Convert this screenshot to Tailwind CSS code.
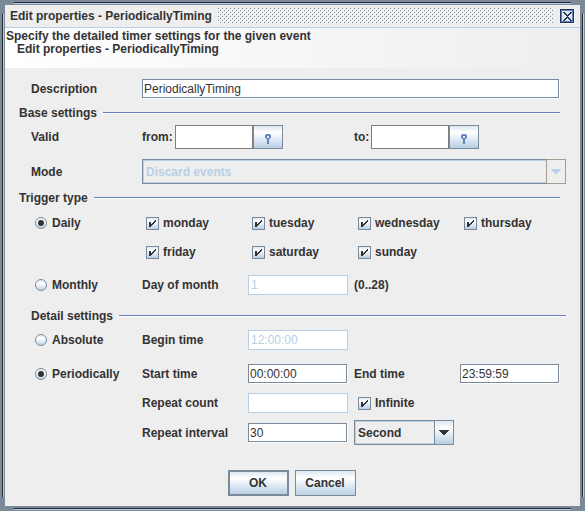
<!DOCTYPE html>
<html lang="en">
<head>
<meta charset="utf-8">
<meta name="viewport" content="width=device-width, initial-scale=1">
<title>Edit properties - PeriodicallyTiming</title>
<script src="https://cdn.jsdelivr.net/npm/@tailwindcss/browser@4"></script>
</head>
<body class="bg-[#eeeeee] font-['Liberation_Sans',Arial,sans-serif] text-[12px] leading-[14px] font-bold text-[#333333]">
<svg class="absolute size-0" aria-hidden="true">
  <defs><linearGradient id="rg" x1="0" y1="0" x2="0" y2="1"><stop offset="0" stop-color="#dde8f3"/><stop offset=".35" stop-color="#ffffff"/><stop offset="1" stop-color="#b8cfe5"/></linearGradient></defs>
  <symbol id="check" viewBox="0 0 13 13"><path d="M3 5h2v5h-2zM9 3h1v2h-1zM8 4h1v2h-1zM7 5h1v2h-1zM6 6h1v2h-1zM5 7h1v2h-1z" fill="#333333"/></symbol>
  <symbol id="pin" viewBox="0 0 6 10"><path d="M1 0h4v1h1v3h-1v1h-1v5h-2v-5h-1v-1h-1v-3h1zM2 2v2h2v-2z" fill="#6382bf" fill-rule="evenodd"/></symbol>
  <symbol id="arrow" viewBox="0 0 10 5"><path d="M0 0h10v1h-1v1h-1v1h-1v1h-1v1h-2v-1h-1v-1h-1v-1h-1v-1h-1z" fill="currentColor"/></symbol>
  <symbol id="ring" viewBox="0 0 12 12"><circle cx="6" cy="6" r="5.5" fill="url(#rg)" stroke="#7a8a99"/></symbol>
</svg>

<div class="relative flex min-h-screen flex-col border-5 border-[#7a8a99]">
  <div class="pointer-events-none absolute inset-x-[9px] -top-[3px] h-[2px] border-b border-[#b8cfe5] bg-[#23292e]"></div>
  <div class="pointer-events-none absolute inset-x-[9px] -bottom-[4px] h-[2px] border-b border-[#b8cfe5] bg-[#23292e]"></div>
  <div class="pointer-events-none absolute inset-y-[9px] -left-[3px] w-[2px] border-r border-[#b8cfe5] bg-[#23292e]"></div>
  <div class="pointer-events-none absolute inset-y-[9px] -right-[4px] w-[2px] border-r border-[#b8cfe5] bg-[#23292e]"></div>

  <header class="flex h-[23px] items-center border-b border-[#b8cfe5] pr-[5px] pl-[5px]">
    <h1>Edit properties - PeriodicallyTiming</h1>
    <svg class="mr-[7px] ml-[6px] h-[16px] min-w-0 flex-1" aria-hidden="true" shape-rendering="crispEdges">
      <defs><pattern id="bumps" width="4" height="4" patternUnits="userSpaceOnUse">
        <path d="M1 1h1v1h-1zM3 3h1v1h-1z" fill="#ffffff"/><path d="M0 0h1v1h-1zM2 2h1v1h-1z" fill="#7a8a99"/>
      </pattern></defs>
      <rect width="100%" height="100%" fill="url(#bumps)"/>
    </svg>
    <button type="button" aria-label="Close" class="block size-[15px]">
      <svg width="15" height="15" viewBox="0 0 15 15" shape-rendering="crispEdges">
        <path d="M1 1h14v14h-14z" fill="#ffffff"/>
        <path d="M0 0h14v14h-14z" fill="#23305c"/>
        <path d="M1 1h12v12h-12z" fill="#6382bf"/>
        <path d="M2 2h10v10h-10z" fill="#dce7f4"/>
        <path d="M3 3h2v1h1v1h1v1h1v-1h1v-1h1v-1h2v1h-1v1h-1v1h-1v1h-1v1h1v1h1v1h1v1h1v1h-2v-1h-1v-1h-1v-1h-1v1h-1v1h-1v1h-2v-1h1v-1h1v-1h1v-1h1v-1h-1v-1h-1v-1h-1v-1h-1z" fill="#23305c"/>
      </svg>
    </button>
  </header>

  <div class="h-[40px] bg-linear-to-r from-white to-[#eeeeee] px-px pt-[2px] leading-[13px]">
    <p>Specify the detailed timer settings for the given event</p>
    <p class="pl-[11px]">Edit properties - PeriodicallyTiming</p>
  </div>

  <form class="px-[14px] pt-[11px] pb-[10px]">
    <div class="grid h-[20px] grid-cols-[111px_minmax(0,1fr)] items-center pl-3">
      <label for="description">Description</label>
      <div class="pr-[7px] pb-px"><input id="description" value="PeriodicallyTiming" class="block h-[19px] w-full border border-[#7a8a99] bg-white pt-px pl-px font-normal shadow-[1px_1px_0_#ffffff]"></div>
    </div>

    <div class="mt-[6px] flex h-[16px] items-center gap-[6px] pr-[6px]"><h2>Base settings</h2><div class="h-[2px] flex-1 border-b border-white bg-[#6382bf]"></div></div>

    <div class="mt-[4px] grid h-[24px] grid-cols-[111px_repeat(4,minmax(0,1fr))] items-center pl-3">
      <span>Valid</span>
      <div class="col-span-2 flex items-center">
        <label for="from" class="w-[33px]">from:</label>
        <input id="from" class="h-[24px] w-[78px] border border-[#7f7f7f] bg-white px-1 font-normal">
        <button type="button" aria-label="Choose start date" class="flex h-[24px] w-[30px] items-center justify-center border border-[#7a8a99] bg-linear-to-b from-[#dde8f3] via-white via-30% to-[#b8cfe5] pt-[4px]"><svg width="6" height="10" shape-rendering="crispEdges"><use href="#pin"/></svg></button>
      </div>
      <div class="col-span-2 flex items-center">
        <label for="to" class="w-[17px]">to:</label>
        <input id="to" class="h-[24px] w-[78px] border border-[#7f7f7f] bg-white px-1 font-normal">
        <button type="button" aria-label="Choose end date" class="flex h-[24px] w-[30px] items-center justify-center border border-[#7a8a99] bg-linear-to-b from-[#dde8f3] via-white via-30% to-[#b8cfe5] pt-[4px]"><svg width="6" height="10" shape-rendering="crispEdges"><use href="#pin"/></svg></button>
      </div>
    </div>

    <div class="mt-[10px] grid h-[25px] grid-cols-[111px_minmax(0,1fr)] items-center pl-3">
      <label for="mode">Mode</label>
      <div class="relative">
        <select id="mode" disabled class="block h-[25px] w-full appearance-none border border-[#7a8a99] bg-[#eeeeee] pl-[3px] text-[#b8cfe5] opacity-100 inset-ring inset-ring-[#b8cfe5]"><option>Discard events</option></select>
        <span class="pointer-events-none absolute inset-y-0 right-0 flex w-[20px] items-center justify-center border border-[#a59c8c] bg-[#eeeeee] text-[#b8cfe5]"><svg width="10" height="5" shape-rendering="crispEdges"><use href="#arrow"/></svg></span>
      </div>
    </div>

    <div class="mt-[6px] flex h-[16px] items-center gap-[6px] pr-[6px]"><h2>Trigger type</h2><div class="h-[2px] flex-1 border-b border-white bg-[#6382bf]"></div></div>

    <div class="mt-[7px] grid grid-cols-[111px_repeat(4,minmax(0,1fr))] items-center gap-y-[9px] pl-3">
      <label class="flex h-[20px] items-center gap-[5px] pl-[4px]"><span class="relative size-[12px]"><input type="radio" name="trigger" checked class="peer absolute inset-0 appearance-none"><svg class="pointer-events-none absolute inset-0" width="12" height="12"><use href="#ring"/></svg><i class="pointer-events-none absolute inset-[3px] hidden rounded-full bg-[#333333] peer-checked:block"></i></span>Daily</label>
      <label class="flex items-center gap-[4px] pl-[4px]"><span class="relative size-[13px]"><input type="checkbox" checked class="peer absolute inset-0 appearance-none border border-[#7a8a99] bg-linear-to-b from-[#dde8f3] via-white via-30% to-[#b8cfe5]"><svg class="pointer-events-none absolute inset-0 hidden peer-checked:block" width="13" height="13" shape-rendering="crispEdges"><use href="#check"/></svg></span>monday</label>
      <label class="flex items-center gap-[4px] pl-[4px]"><span class="relative size-[13px]"><input type="checkbox" checked class="peer absolute inset-0 appearance-none border border-[#7a8a99] bg-linear-to-b from-[#dde8f3] via-white via-30% to-[#b8cfe5]"><svg class="pointer-events-none absolute inset-0 hidden peer-checked:block" width="13" height="13" shape-rendering="crispEdges"><use href="#check"/></svg></span>tuesday</label>
      <label class="flex items-center gap-[4px] pl-[4px]"><span class="relative size-[13px]"><input type="checkbox" checked class="peer absolute inset-0 appearance-none border border-[#7a8a99] bg-linear-to-b from-[#dde8f3] via-white via-30% to-[#b8cfe5]"><svg class="pointer-events-none absolute inset-0 hidden peer-checked:block" width="13" height="13" shape-rendering="crispEdges"><use href="#check"/></svg></span>wednesday</label>
      <label class="flex items-center gap-[4px] pl-[4px]"><span class="relative size-[13px]"><input type="checkbox" checked class="peer absolute inset-0 appearance-none border border-[#7a8a99] bg-linear-to-b from-[#dde8f3] via-white via-30% to-[#b8cfe5]"><svg class="pointer-events-none absolute inset-0 hidden peer-checked:block" width="13" height="13" shape-rendering="crispEdges"><use href="#check"/></svg></span>thursday</label>
      <label class="col-start-2 flex h-[20px] items-center gap-[4px] pl-[4px]"><span class="relative size-[13px]"><input type="checkbox" checked class="peer absolute inset-0 appearance-none border border-[#7a8a99] bg-linear-to-b from-[#dde8f3] via-white via-30% to-[#b8cfe5]"><svg class="pointer-events-none absolute inset-0 hidden peer-checked:block" width="13" height="13" shape-rendering="crispEdges"><use href="#check"/></svg></span>friday</label>
      <label class="flex items-center gap-[4px] pl-[4px]"><span class="relative size-[13px]"><input type="checkbox" checked class="peer absolute inset-0 appearance-none border border-[#7a8a99] bg-linear-to-b from-[#dde8f3] via-white via-30% to-[#b8cfe5]"><svg class="pointer-events-none absolute inset-0 hidden peer-checked:block" width="13" height="13" shape-rendering="crispEdges"><use href="#check"/></svg></span>saturday</label>
      <label class="flex items-center gap-[4px] pl-[4px]"><span class="relative size-[13px]"><input type="checkbox" checked class="peer absolute inset-0 appearance-none border border-[#7a8a99] bg-linear-to-b from-[#dde8f3] via-white via-30% to-[#b8cfe5]"><svg class="pointer-events-none absolute inset-0 hidden peer-checked:block" width="13" height="13" shape-rendering="crispEdges"><use href="#check"/></svg></span>sunday</label>
    </div>

    <div class="mt-[13px] grid h-[20px] grid-cols-[111px_repeat(4,minmax(0,1fr))] items-center pl-3">
      <label class="flex items-center gap-[5px] pl-[4px]"><span class="relative size-[12px]"><input type="radio" name="trigger" class="peer absolute inset-0 appearance-none"><svg class="pointer-events-none absolute inset-0" width="12" height="12"><use href="#ring"/></svg><i class="pointer-events-none absolute inset-[3px] hidden rounded-full bg-[#333333] peer-checked:block"></i></span>Monthly</label>
      <label for="day">Day of month</label>
      <div class="pr-[6px]"><input id="day" disabled value="1" class="block h-[20px] w-full border border-[#b8cfe5] bg-white pl-[2px] font-normal text-[#b8cfe5]"></div>
      <span>(0..28)</span>
    </div>

    <div class="mt-[13px] flex h-[16px] items-center gap-[6px] pl-3"><h2>Detail settings</h2><div class="h-[2px] flex-1 border-b border-white bg-[#6382bf]"></div></div>

    <div class="mt-[6px] grid h-[20px] grid-cols-[111px_repeat(4,minmax(0,1fr))] items-center pl-3">
      <label class="flex items-center gap-[5px] pl-[4px]"><span class="relative size-[12px]"><input type="radio" name="detail" class="peer absolute inset-0 appearance-none"><svg class="pointer-events-none absolute inset-0" width="12" height="12"><use href="#ring"/></svg><i class="pointer-events-none absolute inset-[3px] hidden rounded-full bg-[#333333] peer-checked:block"></i></span>Absolute</label>
      <label for="begin">Begin time</label>
      <div class="pr-[6px]"><input id="begin" disabled value="12:00:00" class="block h-[20px] w-full border border-[#b8cfe5] bg-white pl-[2px] font-normal text-[#b8cfe5]"></div>
    </div>

    <div class="mt-[14px] grid h-[20px] grid-cols-[111px_repeat(4,minmax(0,1fr))] items-center pl-3">
      <label class="flex items-center gap-[5px] pl-[4px]"><span class="relative size-[12px]"><input type="radio" name="detail" checked class="peer absolute inset-0 appearance-none"><svg class="pointer-events-none absolute inset-0" width="12" height="12"><use href="#ring"/></svg><i class="pointer-events-none absolute inset-[3px] hidden rounded-full bg-[#333333] peer-checked:block"></i></span>Periodically</label>
      <label for="start">Start time</label>
      <div class="pr-[7px] pb-px"><input id="start" value="00:00:00" class="block h-[19px] w-full border border-[#7a8a99] bg-white pt-px pl-px font-normal shadow-[1px_1px_0_#ffffff]"></div>
      <label for="end">End time</label>
      <div class="pr-[7px] pb-px"><input id="end" value="23:59:59" class="block h-[19px] w-full border border-[#7a8a99] bg-white pt-px pl-px font-normal shadow-[1px_1px_0_#ffffff]"></div>
    </div>

    <div class="mt-[9px] grid h-[20px] grid-cols-[111px_repeat(4,minmax(0,1fr))] items-center pl-3">
      <label for="count" class="col-start-2">Repeat count</label>
      <div class="pr-[6px]"><input id="count" disabled class="block h-[20px] w-full border border-[#b8cfe5] bg-white pl-[2px] font-normal text-[#b8cfe5]"></div>
      <label class="flex items-center gap-[4px] pl-[4px]"><span class="relative size-[13px]"><input type="checkbox" checked class="peer absolute inset-0 appearance-none border border-[#7a8a99] bg-linear-to-b from-[#dde8f3] via-white via-30% to-[#b8cfe5]"><svg class="pointer-events-none absolute inset-0 hidden peer-checked:block" width="13" height="13" shape-rendering="crispEdges"><use href="#check"/></svg></span>Infinite</label>
    </div>

    <div class="mt-[7px] grid h-[25px] grid-cols-[111px_repeat(4,minmax(0,1fr))] items-center pl-3">
      <label for="interval" class="col-start-2">Repeat interval</label>
      <div class="pr-[7px] pb-px"><input id="interval" value="30" class="block h-[19px] w-full border border-[#7a8a99] bg-white pt-px pl-px font-normal shadow-[1px_1px_0_#ffffff]"></div>
      <div class="relative mr-[6px]">
        <select aria-label="Interval unit" class="block h-[25px] w-full appearance-none border border-[#7a8a99] bg-[#eeeeee] pl-[3px] inset-ring inset-ring-[#b8cfe5]"><option>Second</option><option>Minute</option><option>Hour</option></select>
        <span class="pointer-events-none absolute inset-y-0 right-0 flex w-[20px] items-center justify-center border border-[#7a8a99] bg-linear-to-b from-[#dde8f3] via-white via-30% to-[#b8cfe5]"><svg width="10" height="5" shape-rendering="crispEdges"><use href="#arrow"/></svg></span>
      </div>
    </div>

    <div class="mt-[25px] flex justify-center gap-[6px] pr-[2px]">
      <button type="submit" class="h-[26px] w-[61px] border-2 border-[#7a8a99] bg-linear-to-b from-[#dde8f3] via-white via-30% to-[#b8cfe5]">OK</button>
      <button type="button" class="h-[26px] w-[61px] border border-[#7a8a99] bg-linear-to-b from-[#dde8f3] via-white via-30% to-[#b8cfe5]">Cancel</button>
    </div>
  </form>
</div>
</body>
</html>
